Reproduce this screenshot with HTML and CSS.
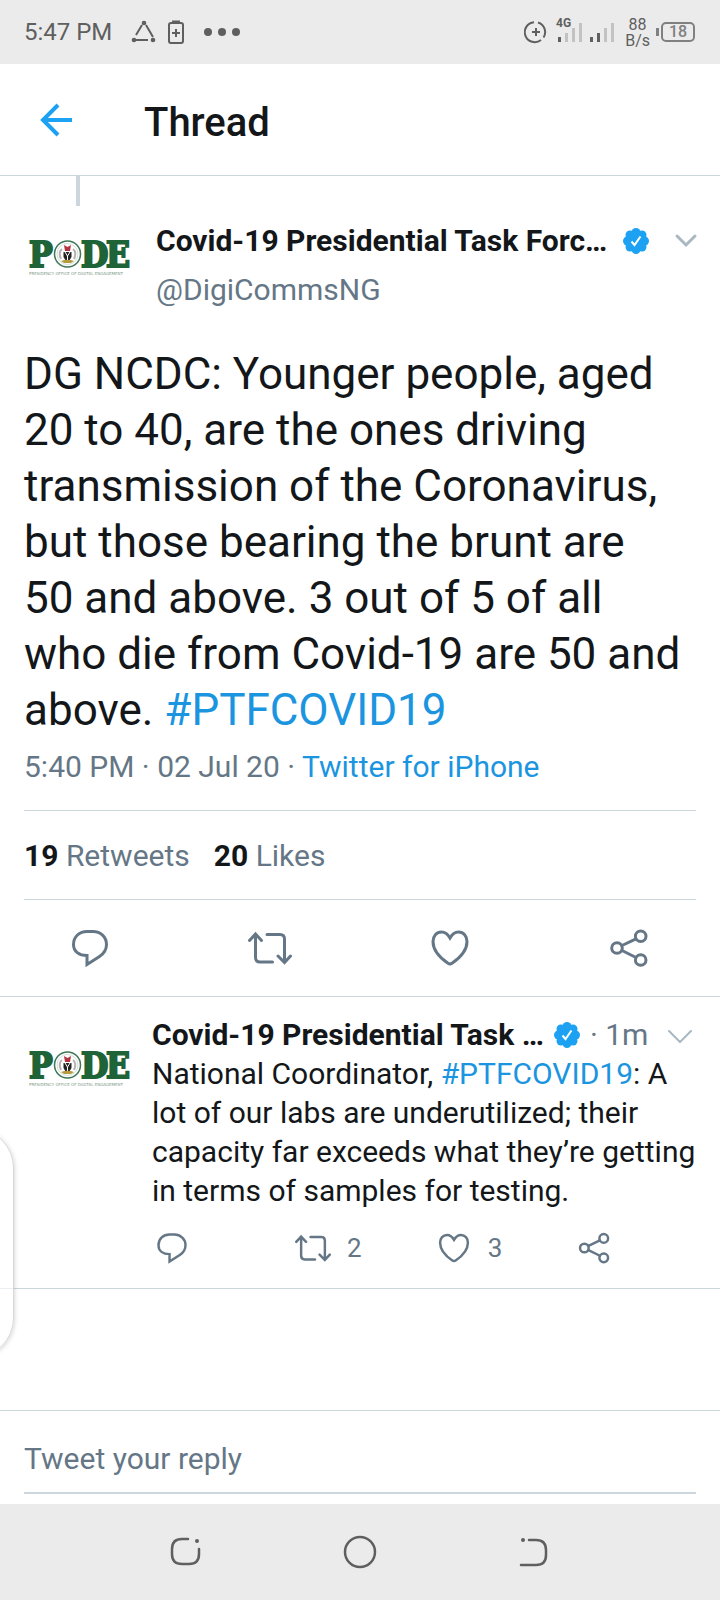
FILE: index.html
```html
<!DOCTYPE html>
<html lang="en">
    <head>
        <meta charset="utf-8" />
        <meta name="viewport" content="width=device-width, initial-scale=1" />
        <title>Thread</title>
        <link rel="stylesheet" href="styles.css">
    </head>
    <body>
        <!-- Shared icons -->
        <svg class="sprite" aria-hidden="true">
            <symbol id="reply" viewBox="0 0 44 44">
                <path d="M5.5 18.5C5.5 10.5 11.5 5.5 19 5.5H25C32.5 5.5 38.5 11 38.5 18.5C38.5 24 36 27.5 31.5 30.5L19 38.5V29.5C11 29.5 5.5 25.5 5.5 18.5Z" />
            </symbol>
            <symbol id="retweet" viewBox="0 0 44 44">
                <path d="M1.500 14.500L7.500 8L13.500 14.500M7.500 8V31.500Q7.500 36 12 36H24.500M19 8.500H32Q36.500 8.500 36.500 13V36.500M30 30L36.500 36.500L42.500 30" />
            </symbol>
            <symbol id="heart" viewBox="0 0 44 44">
                <path d="M22 12C19.500 7.500 16.500 6 13.500 6C8.500 6 5 10 5 15.500C5 25 13 32.500 20 37.300Q22 38.700 24 37.300C31 32.500 39 25 39 15.500C39 10 35.500 6 30.500 6C27.500 6 24.500 7.500 22 12Z" />
            </symbol>
            <symbol id="share" viewBox="0 0 44 44">
                <circle cx="9" cy="22" r="5.300" />
                <circle cx="32.700" cy="10.300" r="5.300" />
                <circle cx="32.700" cy="34" r="5.300" />
                <path d="M14 19.500L28 12.800M14 24.500L28 31.500" />
            </symbol>
            <symbol id="verified" viewBox="0 0 26 26">
                <g fill="#1da1f2">
                    <circle cx="13" cy="13" r="10" />
                    <circle cx="13" cy="4.500" r="4.500" />
                    <circle cx="19" cy="7" r="4.500" />
                    <circle cx="21.500" cy="13" r="4.500" />
                    <circle cx="19" cy="19" r="4.500" />
                    <circle cx="13" cy="21.500" r="4.500" />
                    <circle cx="7" cy="19" r="4.500" />
                    <circle cx="4.500" cy="13" r="4.500" />
                    <circle cx="7" cy="7" r="4.500" />
                </g>
                <path d="M8.500 13.500L11.500 17L17.500 8.500" fill="none" stroke="#fff" stroke-width="2" />
            </symbol>
            <symbol id="logo" viewBox="0 0 108 108">
                <g class="logo-letters">
                    <text x="5" y="61">P</text>
                    <text x="57" y="61">D</text>
                    <text x="82" y="61">E</text>
                </g>
                <circle cx="43.500" cy="48" r="13" fill="#fff" stroke="#3f7655" stroke-width="1.500" />
                <circle cx="43.500" cy="48" r="10.500" fill="none" stroke="#d4ddd6" />
                <path d="M38 43Q34 46 37 53M49 43Q53 46 50 53" fill="none" stroke="#b9b0b0" stroke-width="2" />
                <path d="M40 39L43.500 41L47 39L46 45H41Z" fill="#b3343f" />
                <path d="M39.500 46H47.500V51Q46.500 54 43.500 55Q40.500 54 39.500 51Z" fill="#222" />
                <path d="M41 46L43.500 50V55M46 46L43.500 50" fill="none" stroke="#fff" />
                <path d="M37 55Q43.500 52.500 50 55L47 57H40Z" fill="#b59b3c" />
                <text class="logo-caption" x="5" y="69">PRESIDENCY OFFICE OF DIGITAL ENGAGEMENT</text>
            </symbol>
        </svg>

        <div class="statusbar">
            <span>5:47 PM</span>
            <svg class="status-apps" width="106" height="28" viewBox="0 0 106 28">
                <g fill="none" stroke="#5f5f5f" stroke-width="2">
                    <path d="M11 7L5 17M15 7L22 19M5 22H17" />
                    <rect x="38" y="5" width="14" height="20" rx="2" />
                    <path d="M41 3.500H49M41 15H49M45 11V19" />
                </g>
                <g fill="#5f5f5f">
                    <circle cx="13" cy="5" r="2.300" />
                    <circle cx="3" cy="22" r="2.300" />
                    <circle cx="22" cy="22" r="2.300" />
                    <circle cx="77" cy="14" r="4" />
                    <circle cx="91" cy="14" r="4" />
                    <circle cx="105" cy="14" r="4" />
                </g>
            </svg>
            <div class="status-right">
                <svg width="92" height="28" viewBox="0 0 92 28">
                    <g fill="none" stroke="#5f5f5f" stroke-width="2">
                        <path d="M14 4.500A10 10 0 0 1 19.500 19.500M17 22A10 10 0 1 1 10 4.200" />
                        <path d="M8 14H16M12 10V18" />
                    </g>
                    <text class="network" x="32" y="9">4G</text>
                    <g fill="#5f5f5f">
                        <rect x="34" y="19" width="3" height="5" />
                        <rect x="66" y="19" width="3" height="5" />
                        <rect x="73" y="15" width="3" height="9" />
                    </g>
                    <g fill="#c2c2c2">
                        <rect x="41" y="15" width="3" height="9" />
                        <rect x="48" y="10" width="3" height="14" />
                        <rect x="55" y="5" width="3" height="19" />
                        <rect x="80" y="10" width="3" height="14" />
                        <rect x="87" y="5" width="3" height="19" />
                    </g>
                </svg>
                <span class="speed">88<br />B/s</span>
                <span class="battery">18</span>
            </div>
        </div>

        <header class="topbar">
            <button class="back" aria-label="Back">
                <svg width="36" height="36" viewBox="0 0 36 36">
                    <path d="M34 18H5M20 3L5 18L20 33" fill="none" stroke="#1da1f2" stroke-width="4" />
                </svg>
            </button>
            <h1>Thread</h1>
        </header>

        <main>
            <article class="tweet-main">
                <div class="connector"></div>
                <div class="author">
                    <svg class="avatar"><use href="#logo" /></svg>
                    <div class="author-text">
                        <div class="author-row">
                            <span class="name">Covid-19 Presidential Task Forc…</span>
                            <svg class="verified"><use href="#verified" /></svg>
                        </div>
                        <div class="handle">@DigiCommsNG</div>
                    </div>
                    <button class="more" aria-label="More options">
                        <svg width="24" height="16" viewBox="0 0 24 16">
                            <path d="M3 4L12 13L21 4" stroke-width="3" />
                        </svg>
                    </button>
                </div>
                <p class="text">DG NCDC: Younger people, aged 20 to 40, are the ones driving transmission of the Coronavirus, but those bearing the brunt are 50&nbsp;and above. 3 out of 5 of all who die from Covid-19 are 50&nbsp;and above. <a href="#">#PTFCOVID19</a></p>
                <div class="date">5:40 PM · 02 Jul 20 · <a href="#">Twitter for iPhone</a></div>
                <div class="stats">
                    <span><b>19</b> Retweets</span>
                    <span><b>20</b> Likes</span>
                </div>
                <div class="actions">
                    <button aria-label="Reply"><svg><use href="#reply" /></svg></button>
                    <button aria-label="Retweet"><svg><use href="#retweet" /></svg></button>
                    <button aria-label="Like"><svg><use href="#heart" /></svg></button>
                    <button aria-label="Share"><svg><use href="#share" /></svg></button>
                </div>
            </article>

            <article class="tweet">
                <svg class="avatar"><use href="#logo" /></svg>
                <div class="tweet-body">
                    <div class="tweet-head">
                        <span class="name">Covid-19 Presidential Task …</span>
                        <svg class="verified"><use href="#verified" /></svg>
                        <span class="age">· 1m</span>
                        <button class="more" aria-label="More options">
                            <svg width="24" height="16" viewBox="0 0 24 16">
                                <path d="M1 2L12 13L23 2" stroke-width="2" />
                            </svg>
                        </button>
                    </div>
                    <p>National Coordinator, <a href="#">#PTFCOVID19</a>: A lot of our labs are underutilized; their capacity far exceeds what they’re getting in terms of samples for testing.</p>
                    <div class="small-actions">
                        <button aria-label="Reply"><svg><use href="#reply" /></svg></button>
                        <button aria-label="Retweet"><svg><use href="#retweet" /></svg>2</button>
                        <button aria-label="Like"><svg><use href="#heart" /></svg>3</button>
                        <button aria-label="Share"><svg><use href="#share" /></svg></button>
                    </div>
                </div>
            </article>
        </main>

        <form class="composer">
            <input type="text" placeholder="Tweet your reply" aria-label="Tweet your reply" />
        </form>

        <nav class="navbar">
            <button aria-label="Recent apps">
                <svg width="36" height="36" viewBox="0 0 36 36">
                    <path d="M20 5H14Q4 5 4 15V20Q4 30 14 30H21Q31 30 31 20V15" />
                    <circle class="dot" cx="29" cy="7" r="2" />
                </svg>
            </button>
            <button aria-label="Home">
                <svg width="36" height="36" viewBox="0 0 36 36">
                    <circle cx="18" cy="18" r="15" />
                </svg>
            </button>
            <button aria-label="Back">
                <svg width="36" height="36" viewBox="0 0 36 36">
                    <path d="M13 6H20Q30 6 30 16V21Q30 31 20 31H5" />
                    <circle class="dot" cx="7" cy="6" r="2" />
                </svg>
            </button>
        </nav>

        <!-- Handle of the side panel, lies over the feed -->
        <div class="edge-panel"></div>
    </body>
</html>
```

FILE: styles.css
```css
* {
    box-sizing: border-box;
}
body {
    background-color: #fff;
    color: #14171a;
    display: flex;
    flex-direction: column;
    font-family: Roboto, "Liberation Sans", sans-serif;
    font-size: 30px;
    line-height: 36px;
    margin: 0;
    min-height: 100vh;
    overflow-x: hidden;
    position: relative;
}
a {
    color: #1b95e0;
    text-decoration: none;
}
button {
    align-items: center;
    background: none;
    border: 0;
    color: inherit;
    display: flex;
    font: inherit;
    padding: 0;
}
p {
    margin: 0;
}
svg {
    display: block;
    flex-shrink: 0;
}
.sprite {
    height: 0;
    position: absolute;
    width: 0;
}

/* Status bar */
.statusbar {
    align-items: center;
    background-color: #ebebeb;
    color: #5f5f5f;
    display: flex;
    font-size: 24px;
    height: 64px;
    padding: 0 25px 0 24px;
}
.status-apps {
    margin-left: 19px;
    overflow: visible;
}
.status-right {
    align-items: center;
    display: flex;
    margin-left: auto;
}
.network {
    fill: #5f5f5f;
    font-size: 12px;
    font-weight: bold;
}
.speed {
    font-size: 16px;
    line-height: 16px;
    margin: 0 10px 0 9px;
    padding-top: 2px;
    text-align: center;
}
.battery {
    border: 2px solid #808080;
    border-radius: 5px;
    color: #808080;
    font-size: 16px;
    font-weight: 500;
    line-height: 16px;
    margin-left: 1px;
    position: relative;
    text-align: center;
    width: 34px;
}
.battery::before {
    background-color: #808080;
    content: "";
    height: 8px;
    left: -7px;
    position: absolute;
    top: 4px;
    width: 3px;
}

/* Header */
.topbar {
    align-items: center;
    border-bottom: 1px solid #ccd6dd;
    display: flex;
    height: 112px;
    padding: 0 38px;
}
.topbar h1 {
    font-size: 40px;
    font-weight: 500;
    line-height: 48px;
    margin: 0 0 0 70px;
    padding-top: 6px;
}

/* Main tweet */
main {
    flex: 1;
}
.tweet-main {
    border-bottom: 1px solid #ccd6dd;
}
.connector {
    background-color: #ccd6dd;
    height: 30px;
    margin-left: 76px;
    width: 4px;
}
.author {
    align-items: flex-start;
    display: flex;
    padding: 0 22px 0 24px;
}
.avatar {
    height: 108px;
    width: 108px;
}
.logo-letters {
    fill: #1f6338;
    font-family: "DejaVu Serif Condensed", "DejaVu Serif", serif;
    font-size: 35px;
    font-weight: bold;
    stroke: #1f6338;
    stroke-width: 2px;
}
.logo-caption {
    fill: #7d9a88;
    font-family: "DejaVu Sans", sans-serif;
    font-size: 4px;
}
.author-text {
    margin-left: 24px;
    padding-top: 17px;
}
.author-row {
    align-items: center;
    display: flex;
    gap: 16px;
    margin-bottom: 13px;
}
.name {
    font-weight: bold;
    white-space: nowrap;
}
.verified {
    height: 26px;
    width: 26px;
}
.handle,
.date,
.stats,
.age {
    color: #657786;
}
.age {
    white-space: nowrap;
}
.more {
    margin-left: auto;
}
.more path {
    fill: none;
    stroke: #aab8c2;
    stroke-linecap: round;
}
.author .more {
    height: 36px;
    margin-top: 16px;
}
.text {
    font-size: 44px;
    line-height: 56px;
    padding: 32px 32px 0 24px;
}
.date {
    margin: 0 24px;
    padding: 11px 0 25px;
}
.stats {
    border-bottom: 1px solid #ccd6dd;
    border-top: 1px solid #ccd6dd;
    display: flex;
    gap: 24px;
    margin: 0 24px;
    padding: 27px 0 25px;
}
.stats b {
    color: #14171a;
}
.actions {
    display: flex;
    padding: 26px 0;
}
.actions button {
    flex: 1;
    justify-content: center;
}
.actions svg,
.small-actions svg {
    fill: none;
    height: 44px;
    stroke: #657786;
    stroke-linecap: round;
    stroke-width: 3px;
    width: 44px;
}

/* Replies */
.tweet {
    border-bottom: 1px solid #ccd6dd;
    display: flex;
    gap: 20px;
    line-height: 39px;
    padding: 18px 24px 22px;
}
.tweet .avatar {
    margin-top: 2px;
}
.tweet-body {
    flex: 1;
}
.tweet-head {
    align-items: center;
    display: flex;
    gap: 10px;
}
.tweet-head .more {
    margin-right: 4px;
    padding-top: 4px;
}
.small-actions {
    display: grid;
    grid-template-columns: repeat(3, 26%) auto;
    padding: 20px 0 0 2px;
}
.small-actions button {
    color: #657786;
    font-size: 26px;
    gap: 16px;
    line-height: 36px;
}
.small-actions svg {
    height: 36px;
    width: 36px;
}

/* Reply box */
.composer {
    border-top: 1px solid #ccd6dd;
    padding: 15px 24px 10px;
}
.composer input {
    background: none;
    border: 0;
    border-bottom: 2px solid #ccd6dd;
    color: inherit;
    display: block;
    font: inherit;
    outline: none;
    padding: 15px 0;
    width: 100%;
}
.composer input::placeholder {
    color: #657786;
    opacity: 1;
}

/* System navigation */
.navbar {
    background-color: #ebebeb;
    display: flex;
    gap: 138px;
    height: 96px;
    justify-content: center;
}
.navbar svg {
    fill: none;
    stroke: #5f5f5f;
    stroke-linecap: round;
    stroke-width: 2.5px;
}
.navbar .dot {
    fill: #5f5f5f;
    stroke: none;
}

.edge-panel {
    background-color: rgba(255, 255, 255, 0.6);
    border: 1px solid #d8d8d8;
    border-radius: 40px;
    bottom: 242px;
    box-shadow: 1px 1px 4px rgba(0, 0, 0, 0.15);
    height: 230px;
    left: -86px;
    position: absolute;
    width: 100px;
}
```
